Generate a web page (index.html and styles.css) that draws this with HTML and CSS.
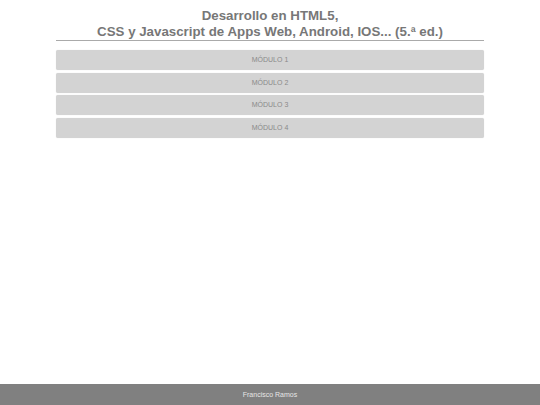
FILE: index.html
```html
<!DOCTYPE html>
<html lang="es">
<head>
<meta charset="utf-8">
<title>Desarrollo en HTML5</title>
<link rel="stylesheet" href="styles.css">
</head>
<body>
<div class="page">
  <header class="head">
    <h1 class="title">Desarrollo en HTML5,<br>CSS y Javascript de Apps Web, Android, IOS... (5.ª ed.)</h1>
  </header>
  <main class="modules">
    <div class="module">MÓDULO 1</div>
    <div class="module">MÓDULO 2</div>
    <div class="module">MÓDULO 3</div>
    <div class="module">MÓDULO 4</div>
  </main>
  <footer class="foot">Francisco Ramos</footer>
</div>
</body>
</html>
```
FILE: styles.css
```css
html, body {
  margin: 0;
  padding: 0;
  height: 100%;
  background: #fff;
  font-family: "Liberation Sans", Arial, sans-serif;
}
.page {
  display: flex;
  flex-direction: column;
  min-height: 100%;
}
.head {
  width: 428px;
  margin: 0 auto;
  border-bottom: 1px solid #aaa;
  padding-top: 8px;
  padding-bottom: 0;
}
.title {
  margin: 0;
  font-size: 13.3px;
  line-height: 16px;
  font-weight: bold;
  color: #777;
  text-align: center;
}
.modules {
  width: 428px;
  margin: 9px auto 0;
  display: flex;
  flex-direction: column;
  gap: 2.33px;
  flex: 1;
}
.module {
  background: #d3d3d3;
  border-radius: 2px;
  height: 20.2px;
  line-height: 20px;
  text-align: center;
  font-size: 7px;
  color: #8a8a8a;
  box-shadow: 0 0 1px rgba(0,0,0,0.15);
}
.foot {
  background: #808080;
  color: #e6e6e6;
  height: 21px;
  line-height: 21px;
  text-align: center;
  font-size: 7px;
}
```
